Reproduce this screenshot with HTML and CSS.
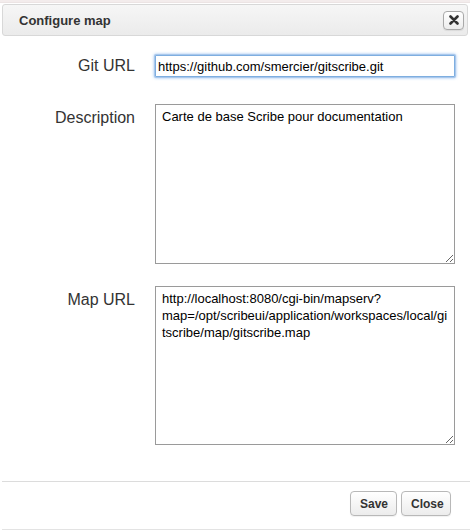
FILE: index.html
```html
<!DOCTYPE html>
<html>
<head>
<meta charset="utf-8">
<link rel="stylesheet" href="styles.css">
</head>
<body>
<div class="topline"></div>
<div class="dialog">
  <div class="header">
    <span class="title">Configure map</span>
    <button class="close-x" type="button" aria-label="Close">
      <svg width="10" height="10" viewBox="0 0 10 10"><path d="M1.5 1.5 L8.5 8.5 M8.5 1.5 L1.5 8.5" stroke="#333" stroke-width="2.6" stroke-linecap="round"/></svg>
    </button>
  </div>
  <form class="form">
    <div class="row row-git">
      <label class="label">Git URL</label>
      <input class="field input" type="text" value="https://github.com/smercier/gitscribe.git">
    </div>
    <div class="row row-desc">
      <label class="label">Description</label>
      <textarea class="field area area-desc">Carte de base Scribe pour documentation</textarea>
    </div>
    <div class="row row-map">
      <label class="label">Map URL</label>
      <textarea class="field area area-map">http://localhost:8080/cgi-bin/mapserv?map=/opt/scribeui/application/workspaces/local/gitscribe/map/gitscribe.map</textarea>
    </div>
  </form>
  <div class="footer">
    <button class="btn" type="button">Save</button>
    <button class="btn" type="button">Close</button>
  </div>
</div>
</body>
</html>
```
FILE: styles.css
```css
html, body {
  margin: 0;
  padding: 0;
  background: #fff;
}
body {
  font-family: "Liberation Sans", Arial, Helvetica, sans-serif;
  color: #333;
  width: 470px;
  height: 531px;
  overflow: hidden;
  position: relative;
}
.topline {
  height: 2px;
  background: #f3ecec;
  border-bottom: 1px solid #ece4e4;
}
.dialog {
  display: flex;
  flex-direction: column;
}
.header {
  margin: 1px 2px 0 2px;
  box-sizing: border-box;
  height: 32px;
  border: 1px solid #d8d8d8;
  border-radius: 3px;
  background: linear-gradient(#f6f6f6, #ebebeb);
  display: flex;
  align-items: center;
  justify-content: space-between;
  padding: 0 3px 0 16px;
}
.title {
  font-weight: bold;
  font-size: 13px;
  color: #333;
}
.close-x {
  width: 21px;
  height: 19px;
  padding: 0;
  border: 1px solid #a9a9a9;
  border-radius: 4px;
  background: linear-gradient(#ffffff, #ececec);
  display: flex;
  align-items: center;
  justify-content: center;
  box-shadow: 0 1px 1px rgba(0,0,0,0.08);
}
.form {
  display: flex;
  flex-direction: column;
  margin: 0;
}
.row {
  display: grid;
  grid-template-columns: 135px 300px;
  column-gap: 20px;
  align-items: start;
}
.row-git { margin-top: 19px; }
.row-desc { margin-top: 27px; }
.row-map { margin-top: 22px; }
.label {
  text-align: right;
  font-size: 16px;
  line-height: 20px;
  color: #333;
  padding-top: 4px;
}
.row-git .label { padding-top: 1px; }
.field {
  box-sizing: border-box;
  width: 300px;
  font-family: "Liberation Sans", Arial, Helvetica, sans-serif;
  font-size: 13px;
  color: #000;
  margin: 0;
}
.input {
  height: 22px;
  padding: 0 2px;
  border: 1px solid #7eaee0;
  outline: none;
  box-shadow: 0 0 0 1px #a9c8ec, 0 0 3px 1px rgba(82,150,230,0.6);
  border-radius: 1px;
  caret-color: #000;
}
.area {
  border: 1px solid #9a9a9a;
  padding: 3px 6px 4px 6px;
  line-height: 17px;
  resize: both;
  border-radius: 0;
  outline: none;
  overflow: hidden;
}
.area-desc { height: 160px; }
.area-map { height: 159px; }
.footer {
  margin-top: 36px;
  margin-left: 2px;
  border-top: 1px solid #dcdcdc;
  height: 49px;
  box-sizing: border-box;
  display: flex;
  justify-content: flex-end;
  align-items: flex-start;
  gap: 4px;
  padding: 9px 19px 0 0;
  border-bottom: 1px solid #e3e3e3;
}
.btn {
  height: 25px;
  padding: 0 9px;
  font-family: "Liberation Sans", Arial, Helvetica, sans-serif;
  font-size: 12px;
  font-weight: bold;
  color: #333;
  border: 1px solid #b8b8b8;
  border-radius: 4px;
  background: linear-gradient(#ffffff, #ececec);
  box-shadow: 0 1px 1px rgba(0,0,0,0.06);
}
.btn:first-child { width: 47px; }
.btn:last-child { width: 50px; }
```
